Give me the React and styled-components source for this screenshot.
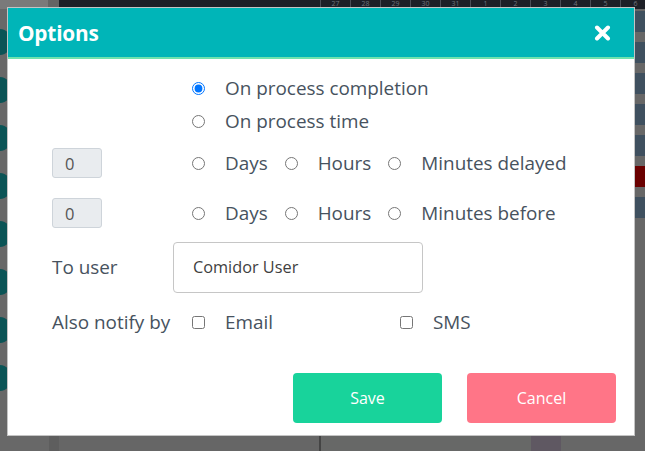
import React from 'react'
import styled, { createGlobalStyle } from 'styled-components'

const GlobalStyle = createGlobalStyle`
  html, body {
    margin: 0;
    padding: 0;
    background: #666;
    font-family: "Open Sans", "Liberation Sans", sans-serif;
  }
  * {
    box-sizing: border-box;
  }
`

const Screen = styled.div`
  position: relative;
  width: 645px;
  height: 451px;
  overflow: hidden;
  background: #676767;
`

/* dimmed app behind the modal */
const AppShell = styled.div`
  display: flex;
  flex-direction: column;
  height: 100%;
`

const TopStrip = styled.div`
  display: flex;
  height: 9px;
  flex: none;
  overflow: hidden;
`

const TopLeft = styled.div`
  width: 48px;
  flex: none;
  background: #7a7a7a;
`

const TopGap = styled.div`
  width: 11px;
  flex: none;
  background: #646464;
`

const DarkBar = styled.div`
  flex: 1;
  display: flex;
  padding-left: 261px;
  background: #1d1f27;
`

const DayCell = styled.div`
  width: 30px;
  flex: none;
  height: 9px;
  border-left: 1px solid #4a4d55;
  color: #6f737c;
  font-size: 7px;
  line-height: 7px;
  text-align: center;
`

const AppBody = styled.div`
  flex: 1;
  display: flex;
`

const Sidebar = styled.div`
  width: 49px;
  display: flex;
  flex-direction: column;
  gap: 22px;
  padding-top: 20px;
  background: #686868;
`

const Dot = styled.div`
  width: 26px;
  height: 26px;
  margin-left: -14px;
  border-radius: 50%;
  background: #0b5456;
`

const Canvas = styled.div`
  flex: 1;
  display: flex;
  align-items: flex-end;
  background: #666;
`

const CanvasFoot = styled.div`
  display: flex;
  height: 15px;
  width: 100%;
`

const FootStrip = styled.div`
  width: ${p => p.w}px;
  flex: none;
  background: ${p => p.bg};
  border-right: ${p => (p.line ? '2px solid #444' : 'none')};
`

const RightRail = styled.div`
  width: 10px;
  display: flex;
  flex-direction: column;
  gap: 10px;
  padding-top: 2px;
`

const RailBlock = styled.div`
  height: 21px;
  background: ${p => (p.alert ? '#6a0000' : '#3f505f')};
`

/* modal */
const Dialog = styled.div`
  position: absolute;
  left: 7px;
  top: 7px;
  width: 628px;
  height: 429px;
  background: #fff;
  border: 1px solid #c4c4c4;
  display: flex;
  flex-direction: column;
`

const Header = styled.div`
  height: 51px;
  flex: none;
  display: flex;
  align-items: center;
  justify-content: space-between;
  padding: 0 23px 0 10px;
  background: #00b5b8;
  border-top: 1px solid #00b5b8;
  border-bottom: 2px solid #6fe3ad;
`

const Title = styled.h2`
  margin: 0;
  color: #fff;
  font-size: 20.8px;
  font-weight: 700;
  letter-spacing: -0.2px;
`

const CloseButton = styled.button`
  display: flex;
  padding: 0;
  border: 0;
  background: none;
`

const Body = styled.div`
  flex: 1;
  display: flex;
  flex-direction: column;
  padding: 13px 18px 12px 44px;
`

const FormRow = styled.div`
  display: grid;
  grid-template-columns: 121px 1fr;
  align-items: center;
  height: ${p => p.h}px;
  color: #47525e;
  font-size: 18.9px;
`

const Label = styled.span`
  white-space: nowrap;
`

const Choices = styled.div`
  display: flex;
  align-items: center;
  padding-left: 19px;
`

const ChoiceGrid = styled.div`
  display: grid;
  grid-template-columns: 208px 1fr;
  align-items: center;
  padding-left: 19px;
`

const Choice = styled.label`
  display: flex;
  align-items: center;
  gap: 20px;
  margin-right: 17px;
  white-space: nowrap;
`

const Radio = styled.input.attrs({ type: 'radio' })`
  width: 13px;
  height: 13px;
  margin: 0;
  flex: none;
`

const Check = styled.input.attrs({ type: 'checkbox' })`
  width: 13px;
  height: 13px;
  margin: 0;
  flex: none;
`

const NumberBox = styled.div`
  width: 50px;
  height: 30px;
  display: flex;
  align-items: center;
  padding-left: 12px;
  background: #e9ecef;
  border: 1px solid #ced4da;
  border-radius: 3px;
  color: #555;
  font-size: 16.5px;
`

const TextBox = styled.div`
  width: 250px;
  height: 51px;
  display: flex;
  align-items: center;
  padding-left: 19px;
  border: 1px solid #c6c6c6;
  border-radius: 4px;
  color: #3f3f3f;
  font-size: 16.3px;
`

const Actions = styled.div`
  display: flex;
  justify-content: flex-end;
  gap: 25px;
  margin-top: auto;
`

const ActionButton = styled.button`
  width: 149px;
  height: 50px;
  border: 0;
  border-radius: 4px;
  background: ${p => (p.danger ? '#ff7587' : '#18d39b')};
  color: #fff;
  font-family: "Open Sans", "Liberation Sans", sans-serif;
  font-size: 16px;
`

const days = ['27', '28', '29', '30', '31', '1', '2', '3', '4', '5', '6']

function CloseIcon() {
  return (
    <svg width="17" height="16" viewBox="0 0 17 16">
      <path
        d="M3 2.5 L14 13.5 M14 2.5 L3 13.5"
        stroke="#fff"
        strokeWidth="4"
        strokeLinecap="round"
      />
    </svg>
  )
}

function Delay({ value, last }) {
  return (
    <FormRow h={50}>
      <NumberBox>{value}</NumberBox>
      <Choices>
        <Choice><Radio name={last} />Days</Choice>
        <Choice><Radio name={last} />Hours</Choice>
        <Choice><Radio name={last} />{`Minutes ${last}`}</Choice>
      </Choices>
    </FormRow>
  )
}

export default function App() {
  return (
    <Screen>
      <GlobalStyle />
      <AppShell>
        <TopStrip>
          <TopLeft />
          <TopGap />
          <DarkBar>
            {days.map(d => (
              <DayCell key={d}>{d}</DayCell>
            ))}
          </DarkBar>
        </TopStrip>
        <AppBody>
          <Sidebar>
            {[0, 1, 2, 3, 4, 5, 6, 7].map(i => (
              <Dot key={i} />
            ))}
          </Sidebar>
          <Canvas>
            <CanvasFoot>
              <FootStrip w={10} bg="#5e5e5e" />
              <FootStrip w={262} bg="#666" line />
              <FootStrip w={210} bg="#676867" />
              <FootStrip w={30} bg="#5f5862" />
              <FootStrip w={74} bg="#676767" />
            </CanvasFoot>
          </Canvas>
          <RightRail>
            {[0, 1, 2, 3, 4, 5, 6].map(i => (
              <RailBlock key={i} alert={i === 5} />
            ))}
          </RightRail>
        </AppBody>
      </AppShell>

      <Dialog>
        <Header>
          <Title>Options</Title>
          <CloseButton>
            <CloseIcon />
          </CloseButton>
        </Header>
        <Body>
          <FormRow h={32}>
            <span />
            <Choices>
              <Choice><Radio name="when" defaultChecked />On process completion</Choice>
            </Choices>
          </FormRow>
          <FormRow h={34}>
            <span />
            <Choices>
              <Choice><Radio name="when" />On process time</Choice>
            </Choices>
          </FormRow>
          <Delay value="0" last="delayed" />
          <Delay value="0" last="before" />
          <FormRow h={58}>
            <Label>To user</Label>
            <TextBox>Comidor User</TextBox>
          </FormRow>
          <FormRow h={52}>
            <Label>Also notify by</Label>
            <ChoiceGrid>
              <Choice><Check />Email</Choice>
              <Choice><Check />SMS</Choice>
            </ChoiceGrid>
          </FormRow>
          <Actions>
            <ActionButton>Save</ActionButton>
            <ActionButton danger>Cancel</ActionButton>
          </Actions>
        </Body>
      </Dialog>
    </Screen>
  )
}
